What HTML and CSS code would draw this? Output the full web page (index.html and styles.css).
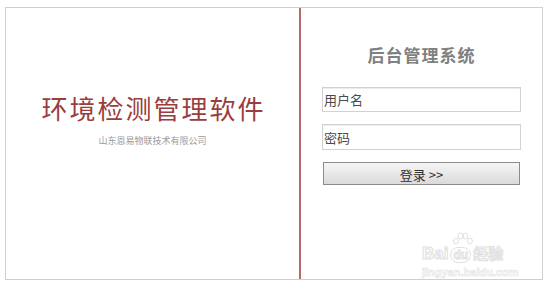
FILE: index.html
```html
<!DOCTYPE html>
<html lang="zh-CN">
<head>
<meta charset="utf-8">
<title>环境检测管理软件</title>
<link rel="stylesheet" href="styles.css">
</head>
<body>
<div class="frame">
  <div class="left">
    <h1 class="title">环境检测管理软件</h1>
    <p class="company">山东恩易物联技术有限公司</p>
  </div>
  <div class="divider"></div>
  <div class="right">
    <h2 class="heading">后台管理系统</h2>
    <form class="login">
      <input class="field" type="text" placeholder="用户名">
      <input class="field" type="password" placeholder="密码">
      <button class="submit" type="button">登录 &gt;&gt;</button>
    </form>
    <div class="watermark">
      <div class="wm-top"><span class="wm-bai">Bai</span><span class="wm-du">du</span><span class="wm-jy">经验</span></div>
      <div class="wm-url">jingyan.baidu.com</div>
      <svg class="wm-paw" width="22" height="18" viewBox="0 0 22 18">
        <ellipse cx="4" cy="9" rx="2.4" ry="3" fill="none" stroke="#e0e0e0" stroke-width="1"/>
        <ellipse cx="8.5" cy="4" rx="2.4" ry="3" fill="none" stroke="#e0e0e0" stroke-width="1"/>
        <ellipse cx="13.5" cy="4" rx="2.4" ry="3" fill="none" stroke="#e0e0e0" stroke-width="1"/>
        <ellipse cx="18" cy="9" rx="2.4" ry="3" fill="none" stroke="#e0e0e0" stroke-width="1"/>
      </svg>
    </div>
  </div>
</div>
</body>
</html>
```
FILE: styles.css
```css
html, body {
  margin: 0;
  padding: 0;
  background: #ffffff;
}
body {
  font-family: "Noto Sans CJK SC", "Liberation Sans", sans-serif;
}
.frame {
  margin: 7px 0 0 5px;
  width: 538px;
  height: 273px;
  box-sizing: border-box;
  border: 1px solid #cfcfcf;
  display: flex;
}
.left {
  width: 293px;
  display: flex;
  flex-direction: column;
  align-items: center;
  padding-top: 85px;
}
.title {
  margin: 0 0 0 2px;
  font-size: 26px;
  line-height: 30px;
  font-weight: 400;
  letter-spacing: 2px;
  color: #9b3d3d;
}
.company {
  margin: 12px 0 0;
  font-size: 9px;
  line-height: 12px;
  color: #9a9a9a;
}
.divider {
  width: 2px;
  background: #b56b6b;
}
.right {
  flex: 1;
  position: relative;
  padding: 35px 0 0 21px;
}
.heading {
  margin: 0;
  width: 199px;
  text-align: center;
  font-size: 17px;
  line-height: 24px;
  font-weight: 700;
  letter-spacing: 1px;
  color: #808080;
}
.login {
  margin-top: 20px;
  display: flex;
  flex-direction: column;
  align-items: flex-start;
}
.field {
  width: 199px;
  height: 25px;
  box-sizing: border-box;
  border: 1px solid #d2d2d2;
  box-shadow: inset 0 1px 1px #ececec;
  padding: 0 0 0 1px;
  margin: 0 0 12px;
  font-family: "Noto Sans CJK SC", "Liberation Sans", sans-serif;
  font-size: 13px;
  color: #444;
  outline: none;
}
.field + .field {
  height: 26px;
}
.field::placeholder {
  color: #4a4a4a;
}
.submit {
  margin: 0 0 0 1px;
  width: 197px;
  height: 23px;
  box-sizing: border-box;
  border: 1px solid #8c8c8c;
  background: linear-gradient(#f6f6f6, #dadada);
  font-family: "Noto Sans CJK SC", "Liberation Sans", sans-serif;
  font-size: 13px;
  line-height: 18px;
  padding: 3px 0 0;
  color: #2e2e2e;
}
.watermark {
  position: absolute;
  left: 121px;
  top: 226px;
  width: 100px;
  height: 46px;
}
.wm-top {
  position: absolute;
  left: 0;
  top: 10px;
  white-space: nowrap;
  font-family: "Liberation Sans", sans-serif;
  font-weight: 700;
  font-size: 17px;
  line-height: 18px;
  color: #ffffff;
  -webkit-text-stroke: 1px #e0e0e0;
}
.wm-du {
  display: inline-block;
  font-size: 12px;
  border: 1px solid #e0e0e0;
  border-radius: 8px;
  padding: 0 2px;
  line-height: 14px;
  margin: 0 2px;
}
.wm-jy {
  font-family: "Noto Sans CJK SC", sans-serif;
  font-size: 15px;
}
.wm-url {
  position: absolute;
  left: 0;
  top: 32px;
  white-space: nowrap;
  font-family: "Liberation Sans", sans-serif;
  font-weight: 700;
  font-size: 11px;
  line-height: 12px;
  color: #ffffff;
  -webkit-text-stroke: 0.6px #e2e2e2;
}
.wm-paw {
  position: absolute;
  left: 30px;
  top: -2px;
}
```
